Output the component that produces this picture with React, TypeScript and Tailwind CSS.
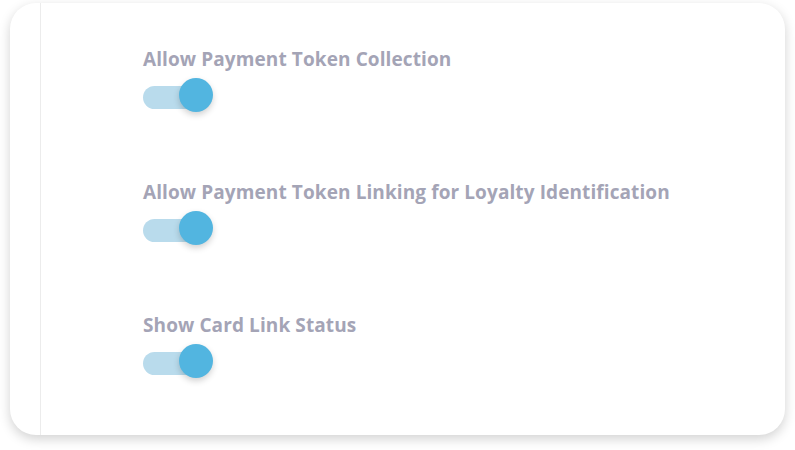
import React from 'react';

const settings = [
  'Allow Payment Token Collection',
  'Allow Payment Token Linking for Loyalty Identification',
  'Show Card Link Status',
];

const Toggle: React.FC = () => (
  <div className="relative w-[71px] h-[34px]">
    <div className="absolute left-0 top-[8px] w-[52px] h-[23px] rounded-full bg-[#b9dbec]" />
    <div className="absolute left-[36px] top-0 w-[34px] h-[34px] rounded-full bg-[#52b5e0] shadow-[0_3px_6px_rgba(0,0,0,0.18)]" />
  </div>
);

export default function App() {
  return (
    <div className="w-[795px] h-[450px] bg-white px-[10px] pt-[3px]" style={{ fontFamily: '"Open Sans", sans-serif' }}>
      <div className="flex h-[432px] rounded-[26px] bg-white shadow-[0_4px_12px_rgba(0,0,0,0.18)] overflow-hidden">
        <div className="w-[31px] border-r border-[#ececec]" />
        <div className="flex-1 pl-[102px] pt-[44px] flex flex-col">
          {settings.map((label, i) => (
            <div key={label} className={i > 0 ? 'mt-[68px]' : ''}>
              <div className="text-[19px] leading-[24px] font-bold tracking-[0.1px] text-[#a4a4b6]">{label}</div>
              <div className="mt-[7px]">
                <Toggle />
              </div>
            </div>
          ))}
        </div>
      </div>
    </div>
  );
}
